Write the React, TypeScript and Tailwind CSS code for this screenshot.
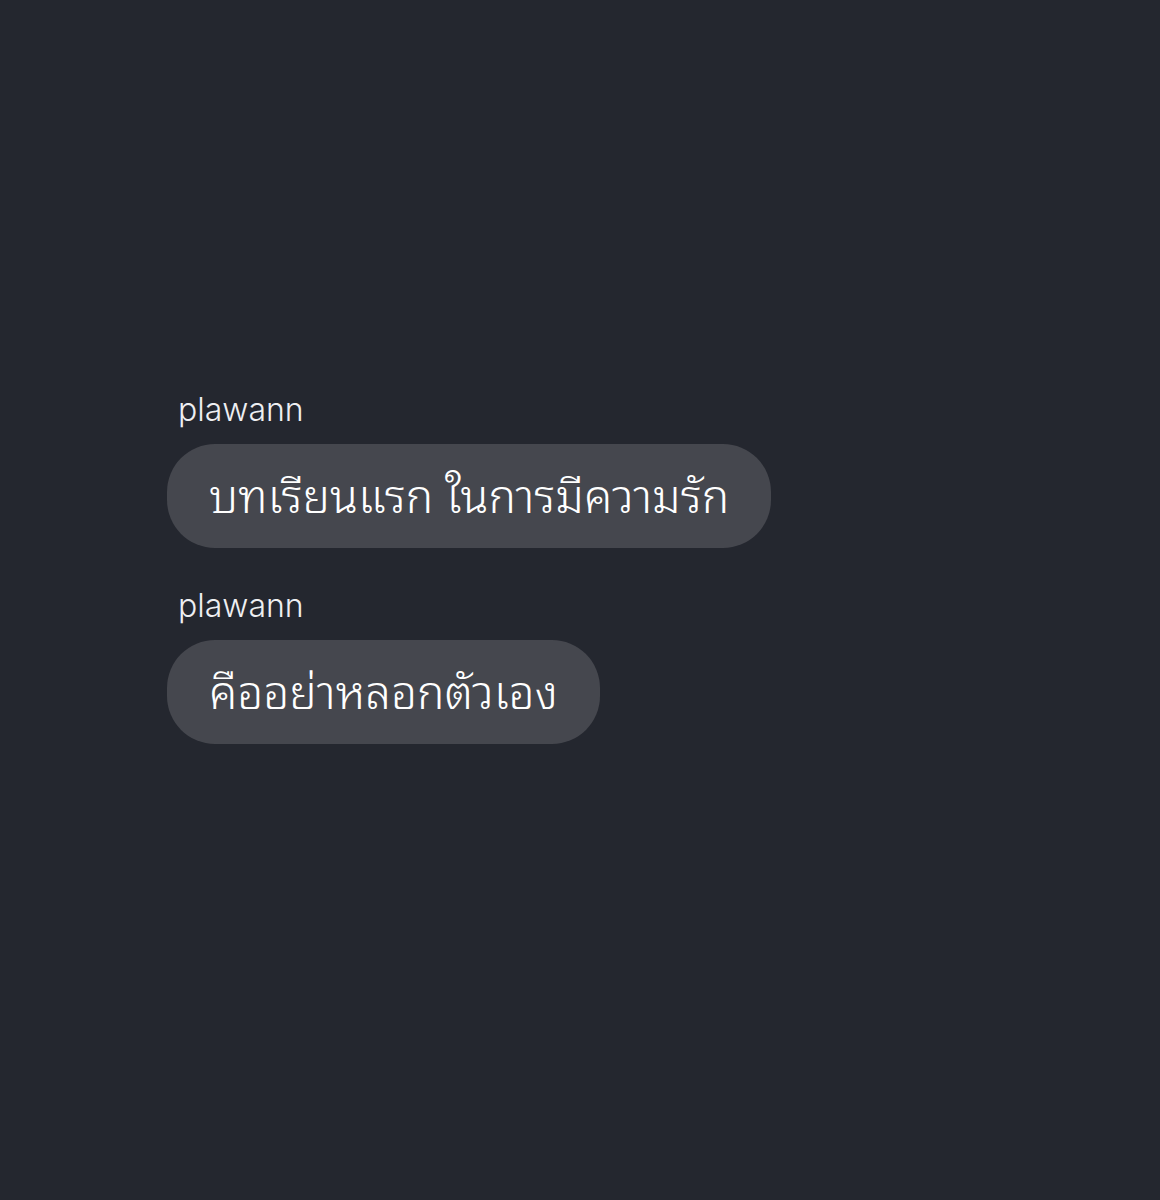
import type { FC } from 'react';

interface Message {
  id: number;
  author: string;
  text: string;
}

const messages: Message[] = [
  { id: 1, author: 'plawann', text: 'บทเรียนแรก ในการมีความรัก' },
  { id: 2, author: 'plawann', text: 'คืออย่าหลอกตัวเอง' },
];

const MessageItem: FC<{ message: Message }> = ({ message }) => (
  <li className="flex flex-col items-start">
    <span className="pl-[11px] text-[32px] leading-[44px] font-light text-[#eeeff2]">{message.author}</span>
    <p
      lang="th"
      className="mt-3 rounded-[48px] bg-[#45474e] px-[42px] pt-4 pb-6 font-['Noto_Sans_Thai_Looped','Loma','Noto_Sans',sans-serif] text-[46px] leading-[64px] font-light text-white"
    >
      {message.text}
    </p>
  </li>
);

const App: FC = () => (
  <main className="min-h-screen bg-[#24272f] px-[167px] pt-[388px] pb-12 font-['Inter',sans-serif]">
    <ul className="flex flex-col gap-9">
      {messages.map((message) => (
        <MessageItem key={message.id} message={message} />
      ))}
    </ul>
  </main>
);

export default App;
